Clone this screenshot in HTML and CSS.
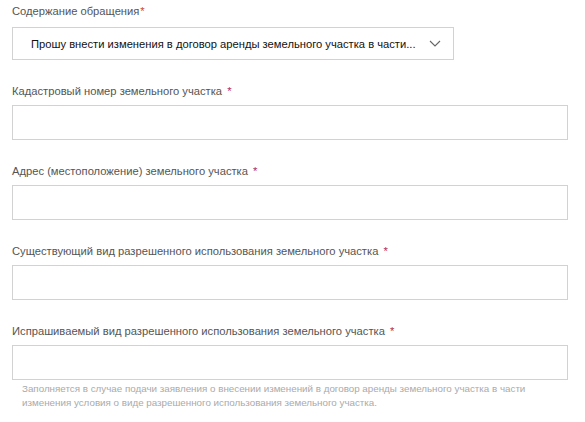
FILE: index.html
```html
<!DOCTYPE html>
<html>
<head>
    <meta charset="utf-8">
    <title>Обращение</title>
    <link rel="stylesheet" href="styles.css">
</head>
<body>
    <form class="appeal-form">
        <div class="field field-first">
            <label class="field-label">Содержание обращения<span class="req req-tight">*</span></label>
            <div class="select-box">
                <span class="select-text">Прошу внести изменения в договор аренды земельного участка в части...</span>
                <svg class="chevron" width="12" height="7" viewBox="0 0 12 7">
                    <path d="M1 1 L6 6 L11 1" fill="none" stroke="#666" stroke-width="1.1"/>
                </svg>
            </div>
        </div>
        <div class="field">
            <label class="field-label">Кадастровый номер земельного участка <span class="req">*</span></label>
            <input class="text-input" type="text">
        </div>
        <div class="field">
            <label class="field-label">Адрес (местоположение) земельного участка <span class="req">*</span></label>
            <input class="text-input" type="text">
        </div>
        <div class="field">
            <label class="field-label">Существующий вид разрешенного использования земельного участка <span class="req">*</span></label>
            <input class="text-input" type="text">
        </div>
        <div class="field">
            <label class="field-label">Испрашиваемый вид разрешенного использования земельного участка <span class="req">*</span></label>
            <input class="text-input" type="text">
            <p class="hint">Заполняется в случае подачи заявления о внесении изменений в договор аренды земельного участка в части изменения условия о виде разрешенного использования земельного участка.</p>
        </div>
    </form>
</body>
</html>
```
FILE: styles.css
```css
body {
    margin: 0;
    padding: 3px 17px 0 12px;
    font-family: Arial, "Liberation Sans", sans-serif;
    background-color: #ffffff;
}

.field {
    margin-bottom: 23px;
}

.field-label {
    display: block;
    font-size: 11.2px;
    line-height: 16px;
    color: #555555;
    margin-bottom: 6px;
}

.field-first .field-label {
    margin-bottom: 8px;
}

.req {
    color: #b0305a;
    margin-left: 2px;
}

.req-tight {
    color: #d04545;
    margin-left: 1px;
}

.select-box {
    display: flex;
    align-items: center;
    box-sizing: border-box;
    width: 442px;
    height: 33px;
    padding: 0 12px 0 18px;
    border: 1px solid #d2d2d2;
}

.select-text {
    flex: 1;
    font-size: 11.2px;
    color: #111111;
    white-space: nowrap;
    overflow: hidden;
}

.chevron {
    display: block;
}

.text-input {
    display: block;
    box-sizing: border-box;
    width: 100%;
    height: 35px;
    border: 1px solid #d2d2d2;
    margin: 0;
}

.hint {
    margin: 2px 0 0 10px;
    font-size: 9.8px;
    line-height: 14px;
    color: #aaaaaa;
}
```
